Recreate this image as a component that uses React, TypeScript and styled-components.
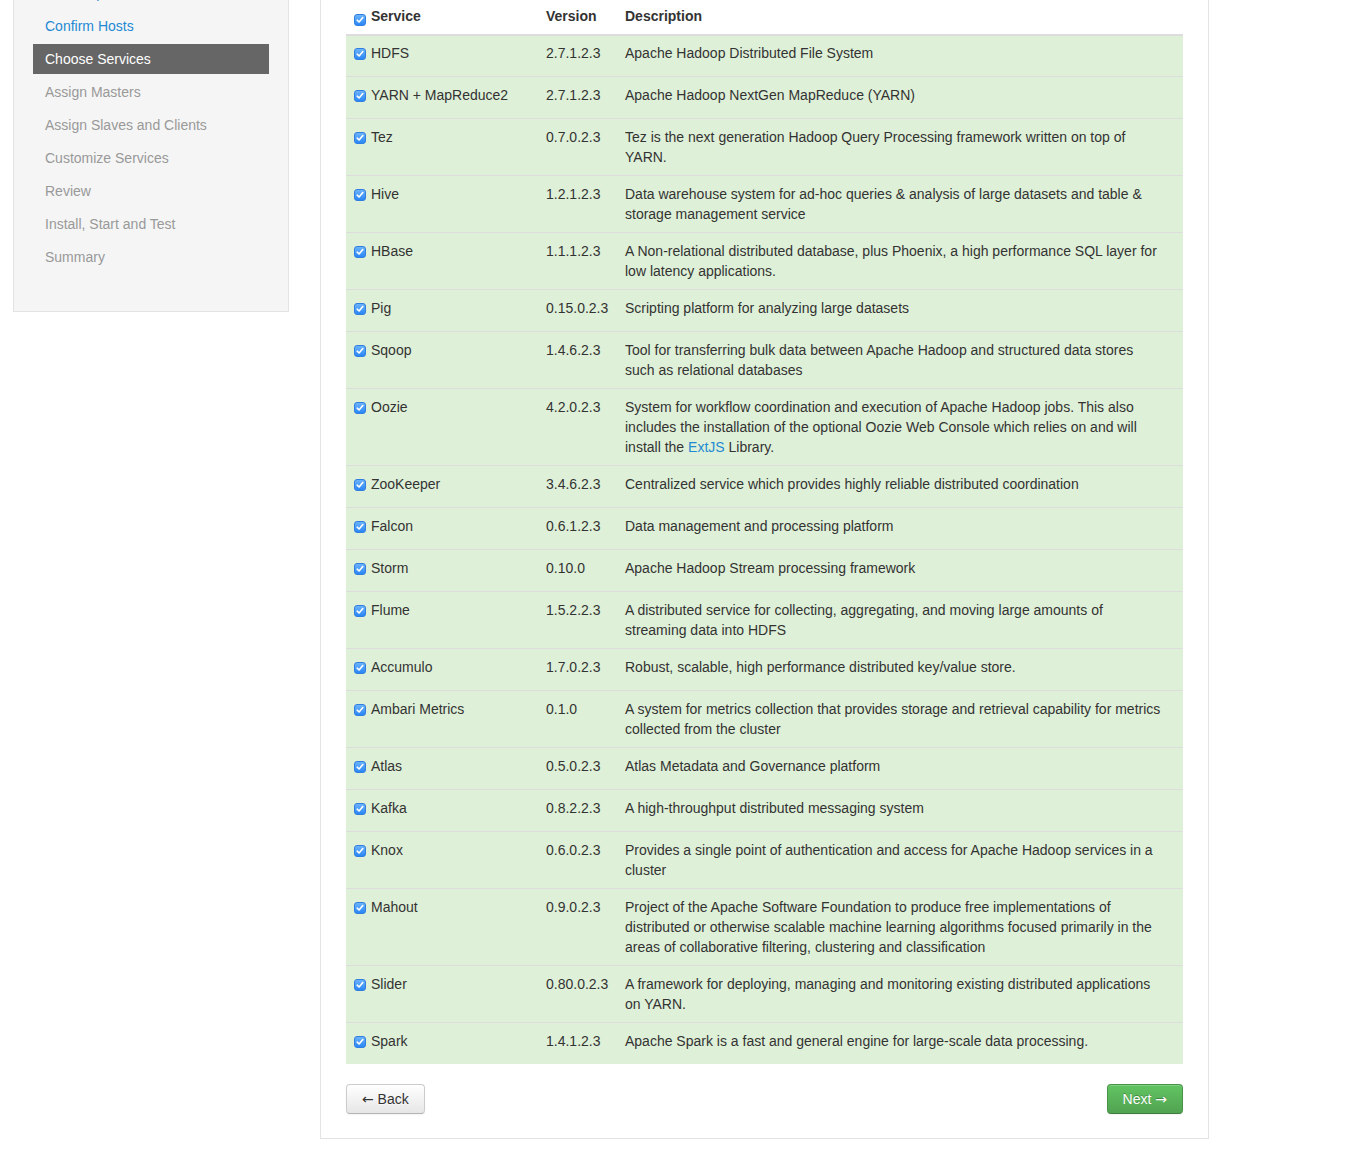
import React from "react";
import styled, { createGlobalStyle } from "styled-components";

const GlobalStyle = createGlobalStyle`
  html, body { margin: 0; padding: 0; background: #fff; }
  body {
    font-family: "Liberation Sans", Arial, Helvetica, sans-serif;
    font-size: 14px;
    line-height: 20px;
    color: #333;
  }
`;

const Page = styled.div`
  display: flex;
  align-items: flex-start;
  gap: 31px;
  padding-left: 13px;
  margin-top: -108px;
`;

const Sidebar = styled.nav`
  width: 276px;
  box-sizing: border-box;
  flex: none;
  background: #f5f5f5;
  border: 1px solid #e3e3e3;
  padding: 19px 19px 19px;
`;

const StepList = styled.ul`
  list-style: none;
  margin: 0;
  padding: 0 0 20px;
  display: flex;
  flex-direction: column;
  gap: 3px;
`;

const Step = styled.li<{ $state: "done" | "active" | "todo" }>`
  height: 30px;
  line-height: 30px;
  padding: 0 12px;
  white-space: nowrap;
  color: ${(p) => (p.$state === "done" ? "#1f8ad3" : p.$state === "active" ? "#fff" : "#999")};
  background: ${(p) => (p.$state === "active" ? "#666" : "transparent")};
`;

const Main = styled.section`
  width: 889px;
  box-sizing: border-box;
  flex: none;
  background: #fff;
  border: 1px solid #e3e3e3;
  padding: 25px 25px 24px;
`;

const Title = styled.h2`
  margin: 0 0 10px;
  font-size: 31px;
  line-height: 40px;
  font-weight: bold;
`;

const Intro = styled.p`
  margin: 0 0 10px;
`;

const Table = styled.table`
  width: 837px;
  table-layout: fixed;
  border-collapse: separate;
  border-spacing: 0;
`;

const HeadCell = styled.th`
  text-align: left;
  font-weight: bold;
  padding: 8px;
  height: 20px;
  line-height: 20px;
  vertical-align: top;
  border-bottom: 2px solid #ddd;
  white-space: nowrap;
`;

const Row = styled.tr`
  background: #dff0d8;
  &:first-child td {
    border-top: 0;
    padding-top: 7px;
    height: 25px;
  }
`;

const Cell = styled.td<{ $nowrap?: boolean }>`
  padding: 8px;
  height: 25px;
  line-height: 20px;
  vertical-align: top;
  border-top: 1px solid #ddd;
  white-space: ${(p) => (p.$nowrap ? "nowrap" : "normal")};
`;

const ServiceLabel = styled.label`
  cursor: pointer;
  white-space: nowrap;
`;

const Box = styled.span<{ $head?: boolean }>`
  position: relative;
  top: ${(p) => (p.$head ? "2px" : "-1px")};
  width: 12px;
  height: 12px;
  border-radius: 3px;
  box-sizing: border-box;
  background: linear-gradient(#6cb3fb, #2a87f5);
  border: 1px solid #2f7ee0;
  display: inline-flex;
  align-items: center;
  justify-content: center;
  margin-right: 5px;
  vertical-align: -1px;
`;

const Link = styled.a`
  color: #1f8ad3;
  text-decoration: none;
`;

const Actions = styled.div`
  display: flex;
  justify-content: space-between;
  margin-top: 20px;
`;

const Button = styled.button<{ $primary?: boolean }>`
  font-family: inherit;
  font-size: 14px;
  line-height: 20px;
  height: 30px;
  padding: 4px 15px;
  border-radius: 4px;
  cursor: pointer;
  color: ${(p) => (p.$primary ? "#fff" : "#333")};
  text-shadow: ${(p) => (p.$primary ? "0 -1px 0 rgba(0,0,0,0.25)" : "0 1px 1px rgba(255,255,255,0.75)")};
  background: ${(p) =>
    p.$primary ? "linear-gradient(#62c462, #51a351)" : "linear-gradient(#ffffff, #e6e6e6)"};
  border: 1px solid ${(p) => (p.$primary ? "#4a944a" : "#cccccc")};
  border-bottom-color: ${(p) => (p.$primary ? "#3d7b3d" : "#b3b3b3")};
  box-shadow: inset 0 1px 0 rgba(255, 255, 255, 0.2), 0 1px 2px rgba(0, 0, 0, 0.05);
`;

const Arrow = styled.span`
  font-family: "DejaVu Sans", sans-serif;
  font-size: 14px;
`;

const Check = ({ head }: { head?: boolean }) => (
  <Box $head={head} role="checkbox" aria-checked="true">
    <svg width="8" height="8" viewBox="0 0 8 8" fill="none">
      <path d="M1.2 4.2 L3.1 6 L6.8 1.6" stroke="#fff" strokeWidth="1.6" strokeLinecap="round" strokeLinejoin="round" />
    </svg>
  </Box>
);

type Service = { name: string; version: string; desc: React.ReactNode[] };

const services: Service[] = [
  { name: "HDFS", version: "2.7.1.2.3", desc: ["Apache Hadoop Distributed File System"] },
  { name: "YARN + MapReduce2", version: "2.7.1.2.3", desc: ["Apache Hadoop NextGen MapReduce (YARN)"] },
  {
    name: "Tez",
    version: "0.7.0.2.3",
    desc: ["Tez is the next generation Hadoop Query Processing framework written on top of", "YARN."],
  },
  {
    name: "Hive",
    version: "1.2.1.2.3",
    desc: ["Data warehouse system for ad-hoc queries & analysis of large datasets and table &", "storage management service"],
  },
  {
    name: "HBase",
    version: "1.1.1.2.3",
    desc: ["A Non-relational distributed database, plus Phoenix, a high performance SQL layer for", "low latency applications."],
  },
  { name: "Pig", version: "0.15.0.2.3", desc: ["Scripting platform for analyzing large datasets"] },
  {
    name: "Sqoop",
    version: "1.4.6.2.3",
    desc: ["Tool for transferring bulk data between Apache Hadoop and structured data stores", "such as relational databases"],
  },
  {
    name: "Oozie",
    version: "4.2.0.2.3",
    desc: [
      "System for workflow coordination and execution of Apache Hadoop jobs. This also",
      "includes the installation of the optional Oozie Web Console which relies on and will",
      <>
        install the <Link href="#">ExtJS</Link> Library.
      </>,
    ],
  },
  { name: "ZooKeeper", version: "3.4.6.2.3", desc: ["Centralized service which provides highly reliable distributed coordination"] },
  { name: "Falcon", version: "0.6.1.2.3", desc: ["Data management and processing platform"] },
  { name: "Storm", version: "0.10.0", desc: ["Apache Hadoop Stream processing framework"] },
  {
    name: "Flume",
    version: "1.5.2.2.3",
    desc: ["A distributed service for collecting, aggregating, and moving large amounts of", "streaming data into HDFS"],
  },
  { name: "Accumulo", version: "1.7.0.2.3", desc: ["Robust, scalable, high performance distributed key/value store."] },
  {
    name: "Ambari Metrics",
    version: "0.1.0",
    desc: ["A system for metrics collection that provides storage and retrieval capability for metrics", "collected from the cluster"],
  },
  { name: "Atlas", version: "0.5.0.2.3", desc: ["Atlas Metadata and Governance platform"] },
  { name: "Kafka", version: "0.8.2.2.3", desc: ["A high-throughput distributed messaging system"] },
  {
    name: "Knox",
    version: "0.6.0.2.3",
    desc: ["Provides a single point of authentication and access for Apache Hadoop services in a", "cluster"],
  },
  {
    name: "Mahout",
    version: "0.9.0.2.3",
    desc: [
      "Project of the Apache Software Foundation to produce free implementations of",
      "distributed or otherwise scalable machine learning algorithms focused primarily in the",
      "areas of collaborative filtering, clustering and classification",
    ],
  },
  {
    name: "Slider",
    version: "0.80.0.2.3",
    desc: ["A framework for deploying, managing and monitoring existing distributed applications", "on YARN."],
  },
  { name: "Spark", version: "1.4.1.2.3", desc: ["Apache Spark is a fast and general engine for large-scale data processing."] },
];

const steps: { label: string; state: "done" | "active" | "todo" }[] = [
  { label: "Get Started", state: "done" },
  { label: "Select Stack", state: "done" },
  { label: "Install Options", state: "done" },
  { label: "Confirm Hosts", state: "done" },
  { label: "Choose Services", state: "active" },
  { label: "Assign Masters", state: "todo" },
  { label: "Assign Slaves and Clients", state: "todo" },
  { label: "Customize Services", state: "todo" },
  { label: "Review", state: "todo" },
  { label: "Install, Start and Test", state: "todo" },
  { label: "Summary", state: "todo" },
];

export default function App() {
  return (
    <>
      <GlobalStyle />
      <Page>
        <Sidebar>
          <StepList>
            {steps.map((s) => (
              <Step key={s.label} $state={s.state}>
                {s.label}
              </Step>
            ))}
          </StepList>
        </Sidebar>
        <Main>
          <Title>Choose Services</Title>
          <Intro>Choose which services you want to install on your cluster.</Intro>
          <Table>
            <colgroup>
              <col style={{ width: 192 }} />
              <col style={{ width: 79 }} />
              <col />
            </colgroup>
            <thead>
              <tr>
                <HeadCell>
                  <ServiceLabel>
                    <Check head />
                    Service
                  </ServiceLabel>
                </HeadCell>
                <HeadCell>Version</HeadCell>
                <HeadCell>Description</HeadCell>
              </tr>
            </thead>
            <tbody>
              {services.map((s) => (
                <Row key={s.name}>
                  <Cell $nowrap>
                    <ServiceLabel>
                      <Check />
                      {s.name}
                    </ServiceLabel>
                  </Cell>
                  <Cell $nowrap>{s.version}</Cell>
                  <Cell>
                    {s.desc.map((line, i) => (
                      <React.Fragment key={i}>
                        {i > 0 && <br />}
                        {line}
                      </React.Fragment>
                    ))}
                  </Cell>
                </Row>
              ))}
            </tbody>
          </Table>
          <Actions>
            <Button>
              <Arrow>←</Arrow> Back
            </Button>
            <Button $primary>
              Next <Arrow>→</Arrow>
            </Button>
          </Actions>
        </Main>
      </Page>
    </>
  );
}
